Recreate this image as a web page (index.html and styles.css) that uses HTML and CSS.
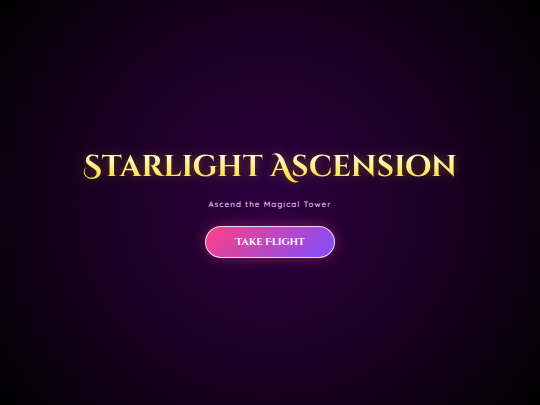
FILE: index.html
```html
<!DOCTYPE html>
<html lang="en">
<head>
    <meta charset="UTF-8">
    <meta name="viewport" content="width=device-width, initial-scale=1.0">
    <title>Starlight Ascension</title>
    <link rel="stylesheet" href="styles.css">
</head>
<body>
    <main class="start-screen">
        <h1>Starlight Ascension</h1>
        <p class="subtitle">Ascend the Magical Tower</p>
        <button class="start-btn" type="button">Take Flight</button>
    </main>
</body>
</html>
```
FILE: styles.css
```css
body {
    margin: 0;
    background: #000;
    text-rendering: geometricPrecision;
}

.start-screen {
    min-height: 100vh;
    display: flex;
    flex-direction: column;
    align-items: center;
    justify-content: center;
    text-align: center;
    background: radial-gradient(circle at center, #2d0040 0%, #1b0024 50%, #000 100%);
}

h1 {
    margin: 0 0 10px;
    font-family: 'Cinzel Decorative', 'Liberation Serif', serif;
    font-size: 30px;
    line-height: 40px;
    font-weight: 700;
    background: linear-gradient(to bottom, #fff, #ffd700);
    -webkit-background-clip: text;
    background-clip: text;
    color: transparent;
    filter: drop-shadow(0 0 5px rgba(255, 215, 0, 0.3));
}

.subtitle {
    margin: 0 0 16px;
    font-family: Quicksand, Lato, sans-serif;
    font-size: 8px;
    line-height: 12px;
    font-weight: 600;
    letter-spacing: 1px;
    color: #e1bee7;
}

.start-btn {
    padding: 8px 29px;
    border: 1px solid rgba(255, 255, 255, 0.8);
    border-radius: 25px;
    font-family: 'Cinzel Decorative', 'Liberation Serif', serif;
    font-size: 10px;
    line-height: 14px;
    font-weight: 700;
    color: #fff;
    background: linear-gradient(135deg, #ff4081, #7c4dff) border-box;
    box-shadow: 0 0 14px rgba(255, 64, 129, 0.4);
    cursor: pointer;
}
```
